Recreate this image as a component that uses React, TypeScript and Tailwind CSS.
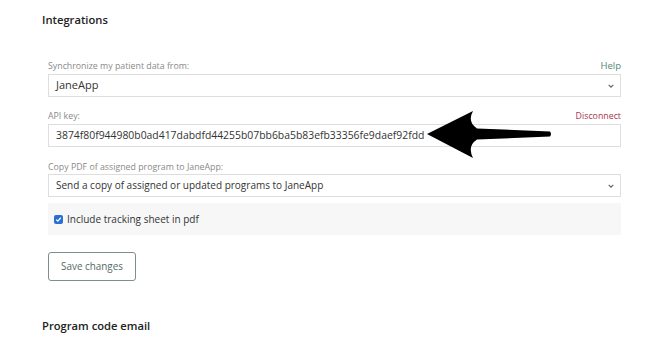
import React from "react";

function Chevron() {
  return (
    <svg width="6" height="4" viewBox="0 0 6 4" className="shrink-0">
      <path d="M0.7 0.8 L3 3.1 L5.3 0.8" fill="none" stroke="#666" strokeWidth="1.2" />
    </svg>
  );
}

export default function App() {
  return (
    <div className="relative w-[668px] h-[353px] bg-white overflow-hidden font-['Open_Sans',sans-serif] text-[#333] pl-[42px] pr-[47px] pt-[12px]">
      <h2 className="text-[11.2px] leading-[16px] font-semibold text-[#222]">Integrations</h2>
      <div className="pl-[6px] mt-[31px]">
        <div className="flex justify-between items-end h-[14px] leading-[14px]">
          <span className="text-[8.8px] text-[#8a8a8a]">Synchronize my patient data from:</span>
          <span className="text-[9.5px] text-[#55897b]">Help</span>
        </div>
        <div className="mt-[1px] h-[23px] border border-[#dedede] flex items-center justify-between pl-[7px] pr-[6px]">
          <span className="text-[11px] text-[#333]">JaneApp</span>
          <Chevron />
        </div>

        <div className="mt-[12px] flex justify-between items-end h-[14px] leading-[14px]">
          <span className="text-[8.8px] text-[#8a8a8a]">API key:</span>
          <span className="text-[8.8px] text-[#a8344d]">Disconnect</span>
        </div>
        <div className="mt-[1px] h-[23px] border border-[#dedede] flex items-center pl-[7px]">
          <span className="text-[10.4px] text-[#333]">3874f80f944980b0ad417dabdfd44255b07bb6ba5b83efb33356fe9daef92fdd</span>
        </div>

        <div className="mt-[13px] flex items-end h-[14px] leading-[14px]">
          <span className="text-[8.8px] text-[#8a8a8a]">Copy PDF of assigned program to JaneApp:</span>
        </div>
        <div className="mt-[0px] h-[23px] border border-[#dedede] flex items-center justify-between pl-[7px] pr-[6px]">
          <span className="text-[10px] text-[#333]">Send a copy of assigned or updated programs to JaneApp</span>
          <Chevron />
        </div>

        <div className="mt-[6px] h-[32px] bg-[#f7f7f7] flex items-center pl-[6px] gap-[4px]">
          <div className="w-[9px] h-[9px] rounded-[2px] bg-[#2a6fd1] flex items-center justify-center">
            <svg width="7" height="7" viewBox="0 0 7 7">
              <path d="M1.2 3.6 L2.8 5.1 L5.8 1.8" fill="none" stroke="white" strokeWidth="1.3" />
            </svg>
          </div>
          <span className="text-[10px] text-[#333]">Include tracking sheet in pdf</span>
        </div>

        <button className="mt-[17px] h-[29px] w-[88px] border border-[#7f8f8b] rounded-[3px] text-[9.9px] text-[#566b66] bg-white">
          Save changes
        </button>
      </div>
      <h2 className="mt-[37px] text-[11.2px] leading-[16px] font-semibold text-[#222]">Program code email</h2>

      <svg className="absolute left-[420px] top-[106px]" width="140" height="58" viewBox="420 106 140 58">
        <path
          d="M427 134 L473 111 Q467 122 477 128.5 L550 131.5 Q552 134 550 136.5 L477 139.5 Q467 146 473 158 Z"
          fill="#000"
        />
      </svg>
    </div>
  );
}
